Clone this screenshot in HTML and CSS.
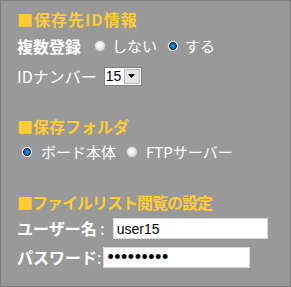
FILE: index.html
```html
<!DOCTYPE html>
<html lang="ja">
<head>
<meta charset="utf-8">
<title>設定</title>
<link rel="stylesheet" href="styles.css">
</head>
<body>
<div class="panel">
  <section class="section">
    <h2 class="heading heading-wide">■保存先ID情報</h2>
    <div class="row">
      <span class="label bold">複数登録</span>
      <label class="option"><input type="radio" name="multi" class="radio">しない</label>
      <label class="option"><input type="radio" name="multi" class="radio" checked>する</label>
    </div>
    <div class="row row-select">
      <span class="label">IDナンバー</span>
      <div class="select">
        <select class="select-input"><option>15</option></select>
        <span class="select-btn"><svg width="7" height="4" viewBox="0 0 7 4"><path d="M0 0H7L3.5 4Z" fill="#000"/></svg></span>
      </div>
    </div>
  </section>
  <section class="section">
    <h2 class="heading">■保存フォルダ</h2>
    <div class="row row-indent">
      <label class="option"><input type="radio" name="folder" class="radio" checked>ボード本体</label>
      <label class="option"><input type="radio" name="folder" class="radio">FTPサーバー</label>
    </div>
  </section>
  <section class="section">
    <h2 class="heading heading-tight">■ファイルリスト閲覧の設定</h2>
    <div class="row row-field">
      <span class="label bold">ユーザー名 <span class="colon">:</span></span>
      <input class="field field-user" type="text" value="user15">
    </div>
    <div class="row row-field row-pass">
      <span class="label bold">パスワード<span class="colon">:</span></span>
      <input class="field field-pass" type="password" value="password1">
    </div>
  </section>
</div>
</body>
</html>
```
FILE: styles.css
```css
* { box-sizing: border-box; }
html, body { margin: 0; padding: 0; }
body {
  font-family: "Noto Sans CJK JP", "Liberation Sans", sans-serif;
  background: #999999;
}
.panel {
  width: 291px;
  height: 287px;
  border: 1px solid #7c7c7c;
  background: #999999;
  padding: 8px 0 0 16px;
  color: #fff;
}
.section {
  display: flex;
  flex-direction: column;
}
.section + .section { margin-top: 30px; }
.heading {
  margin: 0 0 7px;
  font-size: 16px;
  line-height: 20px;
  font-weight: bold;
  color: #ffcc33;
  white-space: nowrap;
}
.heading-wide { letter-spacing: 1px; }
.heading-tight { letter-spacing: -1px; margin-bottom: 6px; }
.row {
  display: flex;
  align-items: center;
  height: 20px;
  white-space: nowrap;
}
.row-select { margin-top: 10px; }
.label {
  font-size: 16px;
  line-height: 20px;
}
.bold { font-weight: bold; }
.row .label + .option { margin-left: 13px; }
.option {
  display: inline-flex;
  align-items: center;
  gap: 6px;
  font-size: 15px;
  line-height: 20px;
}
.option + .option { margin-left: 10px; }
.row-indent { margin-top: -1px; padding-left: 4px; }
.row-indent .option { gap: 8px; }
.radio {
  appearance: none;
  -webkit-appearance: none;
  margin: 0;
  width: 12px;
  height: 12px;
  border-radius: 50%;
  border: 1px solid #a4a4a4;
  background: radial-gradient(circle at 45% 40%, #ffffff 0, #eeeeee 35%, #c4c4c4 100%);
}
.radio:checked {
  background: radial-gradient(circle at 50% 50%, #4fb0ea 0, #1a78c2 1.5px, #0b4f8f 3px, #0a3a6a 3.6px, #f4f4f4 4.2px, #d2d2d2 100%);
}
.select {
  position: relative;
  display: inline-flex;
  margin-left: 7px;
  width: 38px;
  height: 19px;
  border: 1px solid #7f7f7f;
  background: #fff;
}
.select-input {
  appearance: none;
  -webkit-appearance: none;
  border: 0;
  outline: 0;
  margin: 0;
  padding: 0 0 0 1px;
  width: 100%;
  height: 100%;
  background: #fff;
  font-family: "Liberation Sans", sans-serif;
  font-size: 14px;
  color: #000;
}
.select-btn {
  position: absolute;
  top: 1px;
  right: 1px;
  width: 16px;
  height: 15px;
  display: flex;
  align-items: center;
  justify-content: center;
  background: #e4e4e4;
  border: 1px solid #b8b8b8;
  pointer-events: none;
}
.row-field {
  height: 21px;
  gap: 8px;
}
.row-field .label { line-height: 21px; }
.colon { font-weight: normal; }
.row-pass { margin-top: 8px; gap: 2px; }
.field {
  height: 21px;
  margin: 0;
  border: 1px solid #d6d9e0;
  background: #fff;
  padding: 0 3px;
  font-family: "Liberation Sans", sans-serif;
  font-size: 14px;
  color: #000;
  outline: 0;
}
.field-user { width: 155px; }
.field-pass { width: 147px; font-size: 18px; letter-spacing: 0.5px; }
```
